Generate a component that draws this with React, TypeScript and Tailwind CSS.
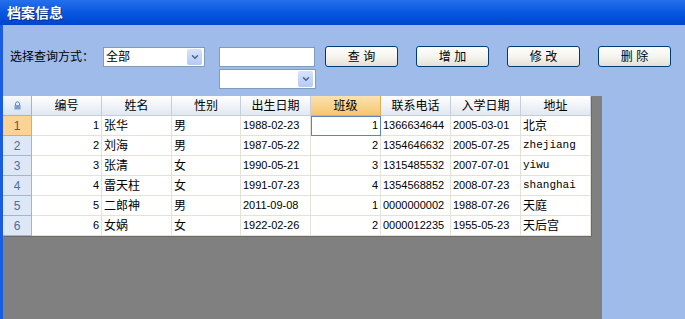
import { ChevronDown } from "lucide-react"

const font = "font-['Liberation_Sans','Noto_Sans_CJK_SC',sans-serif]"

const columns = ["编号", "姓名", "性别", "出生日期", "班级", "联系电话", "入学日期", "地址"]

const rows = [
  ["1", "张华", "男", "1988-02-23", "1", "1366634644", "2005-03-01", "北京"],
  ["2", "刘海", "男", "1987-05-22", "2", "1354646632", "2005-07-25", "zhejiang"],
  ["3", "张清", "女", "1990-05-21", "3", "1315485532", "2007-07-01", "yiwu"],
  ["4", "雷天柱", "女", "1991-07-23", "4", "1354568852", "2008-07-23", "shanghai"],
  ["5", "二郎神", "男", "2011-09-08", "1", "0000000002", "1988-07-26", "天庭"],
  ["6", "女娲", "女", "1922-02-26", "2", "0000012235", "1955-05-23", "天后宫"],
]

function Dropdown({ width, text }: { width: string; text?: string }) {
  return (
    <div className={`${width} h-[20px] bg-white border border-[#7f9db9] flex items-center justify-between pl-[2px] pr-[2px]`}>
      <span className="text-[12px] text-black leading-none">{text}</span>
      <span className="w-[15px] h-[16px] rounded-[2px] bg-gradient-to-b from-[#d7e3fb] to-[#b4c9f5] flex items-center justify-center">
        <ChevronDown className="w-[10px] h-[10px] text-[#4d6185]" strokeWidth={3.5} />
      </span>
    </div>
  )
}

function XpButton({ label }: { label: string }) {
  return (
    <button className="w-[73px] h-[21px] rounded-[3px] border border-[#003c74] bg-gradient-to-b from-white via-[#f5f4ee] to-[#e3e1d6] text-[12px] text-black leading-none">
      {label}
    </button>
  )
}

function LockIcon() {
  return (
    <svg width="9" height="9" viewBox="0 0 9 9">
      <path d="M2.5 4V2.8a2 2 0 0 1 4 0V4" fill="none" stroke="#5a7fc0" strokeWidth="1" />
      <rect x="1.5" y="4" width="6" height="4.5" fill="#7b9bd3" />
    </svg>
  )
}

export default function App() {
  return (
    <div className={`w-[685px] h-[319px] overflow-hidden flex flex-col ${font}`}>
      <div className="h-[25px] bg-gradient-to-b from-[#2470ec] via-[#0857e2] to-[#0044cc] flex items-center pl-[7px]">
        <span className="text-white font-bold text-[14px] leading-none [text-shadow:1px_1px_0_#0a2a80]">档案信息</span>
      </div>

      <div className="flex-1 flex min-h-0">
        <div className="w-[3px] bg-[#1a5de0]" />
        <div className="flex-1 flex flex-col bg-[#9fbbe9] min-h-0">
          <div className="h-[71px] flex items-start pt-[22px]">
            <div className="w-[100px] pl-[7px] h-[20px] flex items-center text-[12px] text-black">选择查询方式：</div>
            <Dropdown width="w-[102px]" text="全部" />
            <div className="ml-[14px] flex flex-col gap-[2px]">
              <div className="w-[96px] h-[20px] bg-white border border-[#7f9db9]" />
              <Dropdown width="w-[97px]" />
            </div>
            <div className="ml-[9px] -mt-[1px] flex gap-[18px]">
              <XpButton label="查 询" />
              <XpButton label="增 加" />
              <XpButton label="修 改" />
              <XpButton label="删 除" />
            </div>
          </div>

          <div className="flex-1 flex min-h-0">
            <div className="w-[599px] bg-[#808080]">
              <div className="w-[588px] grid grid-cols-[29px_70px_70px_69px_70px_70px_70px_70px_70px] bg-white text-[12px] text-black shadow-[1px_1px_0_#6a6a6a]">
                <div className="h-[20px] flex items-center justify-center bg-gradient-to-b from-[#f7f9fc] to-[#d8e2f1] border-r border-b border-[#9eb6ce]">
                  <LockIcon />
                </div>
                {columns.map((c) => (
                  <div
                    key={c}
                    className={`h-[20px] flex items-center justify-center border-r border-b ${
                      c === "班级"
                        ? "bg-gradient-to-b from-[#fbe2b0] to-[#f6c66e] border-[#e3ae5a]"
                        : "bg-gradient-to-b from-white to-[#e2e8f1] border-[#c5cfdc]"
                    }`}
                  >
                    {c}
                  </div>
                ))}
                {rows.map((r, i) => (
                  <>
                    <div
                      key={`h${i}`}
                      className={`h-[20px] flex items-center justify-center border-r border-b border-[#9eb6ce] text-[12px] ${
                        i === 0 ? "bg-[#fbd394] text-[#6b5a3a]" : "bg-[#dde7f5] text-[#4f6d9e]"
                      }`}
                    >
                      {i + 1}
                    </div>
                    {r.map((v, j) => {
                      const right = j === 0 || j === 4
                      const ascii = /^[\x00-\x7f]+$/.test(v)
                      const current = i === 0 && j === 4
                      return (
                        <div
                          key={`${i}-${j}`}
                          className={`h-[20px] flex items-center px-[2px] border-r border-b border-[#e4e2d6] ${
                            right ? "justify-end" : "justify-start"
                          } ${ascii ? "text-[11px]" : "text-[12px]"} ${
                            current ? "outline outline-1 -outline-offset-1 outline-[#5b84c2]" : ""
                          } ${j === 7 && ascii && !/^\d/.test(v) ? "font-['Liberation_Mono',monospace] text-[11px]" : ""}`}
                        >
                          {v}
                        </div>
                      )
                    })}
                  </>
                ))}
              </div>
            </div>
            <div className="flex-1" />
          </div>
        </div>
      </div>
    </div>
  )
}
